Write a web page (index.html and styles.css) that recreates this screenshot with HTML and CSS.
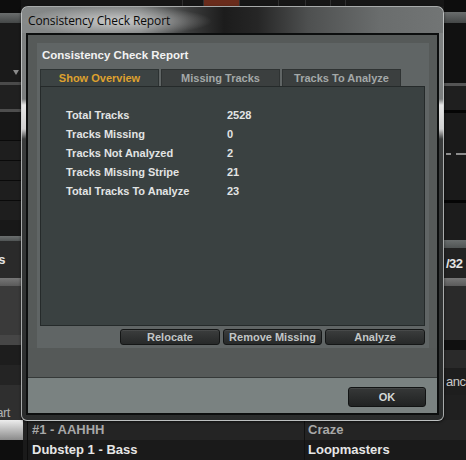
FILE: index.html
```html
<!DOCTYPE html>
<html>
<head>
<meta charset="utf-8">
<link rel="stylesheet" href="styles.css">
</head>
<body>
<div class="app">
  <div class="main">
    <div class="side">
      <div class="blk h13 c-0d"></div>
      <div class="blk h10 c-bar"></div>
      <div class="blk h59 c-1a drop"><span class="tri"></span></div>
      <div class="blk h3 c-4a"></div>
      <div class="blk h24 c-20"></div>
      <div class="blk h3 c-4d"></div>
      <div class="blk h28 c-17"></div>
      <div class="blk h20 c-row"></div>
      <div class="blk h20 c-row"></div>
      <div class="blk h20 c-row"></div>
      <div class="blk h20 c-row"></div>
      <div class="blk h16 c-18"></div>
      <div class="blk h5 c-bar2"></div>
      <div class="blk h37 c-2a lbl-r"><span class="side-txt">s</span></div>
      <div class="blk h8 c-bar3"></div>
      <div class="blk h49 c-3a"></div>
      <div class="blk h10 c-46"></div>
      <div class="blk h20 c-1d"></div>
      <div class="blk h20 c-24"></div>
      <div class="blk h35 c-2f lbl-r bottom"><span class="side-txt dim">Start</span></div>
    </div>
    <div class="center">
      <div class="topstrip">
        <span class="seg w161"></span>
        <span class="seg w20"></span>
        <span class="seg w35 orange"></span>
        <span class="seg w38"></span>
        <span class="seg w26"></span>
        <span class="seg w24"></span>
        <span class="seg w14"></span>
        <span class="seg grow"></span>
      </div>
    </div>
    <div class="side">
      <div class="blk h12 c-0d"></div>
      <div class="blk h11 c-bar"></div>
      <div class="blk h60 c-11"></div>
      <div class="blk h3 c-55"></div>
      <div class="blk h24 c-1f"></div>
      <div class="blk h3 c-05"></div>
      <div class="blk h87 c-1a dashes"><span class="dash d1"></span><span class="dash d2"></span></div>
      <div class="blk h3 c-05"></div>
      <div class="blk h37 c-1c"></div>
      <div class="blk h8 c-bar2"></div>
      <div class="blk h30 c-22 lbl-l"><span class="side-txt">/32</span></div>
      <div class="blk h8 c-bar3"></div>
      <div class="blk h54 c-2a"></div>
      <div class="blk h10 c-10"></div>
      <div class="blk h18 c-2a"></div>
      <div class="blk h27 c-1e lbl-l"><span class="side-txt dim2">ance</span></div>
      <div class="blk h25 c-20"></div>
    </div>
  </div>
  <div class="tracks">
    <div class="trow r1">
      <div class="tsel"></div>
      <div class="tgap"></div>
      <div class="ttitle">#1 - AAHHH</div>
      <div class="tartist">Craze</div>
    </div>
    <div class="trow r2">
      <div class="tsel"></div>
      <div class="tgap"></div>
      <div class="ttitle">Dubstep 1 - Bass</div>
      <div class="tartist">Loopmasters</div>
    </div>
  </div>

  <div class="dialog">
    <div class="titlebar"><span class="title">Consistency Check Report</span></div>
    <div class="client">
      <div class="panel">
        <div class="panel-head">Consistency Check Report</div>
        <div class="tabs">
          <div class="tab active">Show Overview</div>
          <div class="tab">Missing Tracks</div>
          <div class="tab">Tracks To Analyze</div>
        </div>
        <div class="content">
          <div class="stats">
            <div class="lbl">Total Tracks</div><div class="val">2528</div>
            <div class="lbl">Tracks Missing</div><div class="val">0</div>
            <div class="lbl">Tracks Not Analyzed</div><div class="val">2</div>
            <div class="lbl">Tracks Missing Stripe</div><div class="val">21</div>
            <div class="lbl">Total Tracks To Analyze</div><div class="val">23</div>
          </div>
        </div>
        <div class="actions">
          <div class="btn w100">Relocate</div>
          <div class="btn w99">Remove Missing</div>
          <div class="btn w100">Analyze</div>
        </div>
      </div>
      <div class="band"></div>
      <div class="footer">
        <div class="btn ok">OK</div>
      </div>
    </div>
  </div>
</div>
</body>
</html>
```

FILE: styles.css
```css
* { box-sizing: border-box; }
html, body { margin: 0; padding: 0; }
body {
  width: 466px;
  height: 460px;
  overflow: hidden;
  background: #151515;
  font-family: "Liberation Sans", Arial, sans-serif;
}
.app {
  position: relative;
  width: 466px;
  height: 460px;
  display: flex;
  flex-direction: column;
}
.main {
  display: flex;
  height: 420px;
}
.side {
  width: 22px;
  display: flex;
  flex-direction: column;
  overflow: hidden;
}
.main .side:first-child { width: 21px; }
.center {
  flex: 1;
  background: #1b1b1b;
}
.blk { flex: none; width: 100%; position: relative; }
.h3 { height: 3px; } .h5 { height: 5px; } .h8 { height: 8px; } .h10 { height: 10px; }
.h11 { height: 11px; } .h12 { height: 12px; } .h13 { height: 13px; } .h16 { height: 16px; }
.h18 { height: 18px; } .h20 { height: 20px; } .h24 { height: 24px; } .h25 { height: 25px; }
.h27 { height: 27px; } .h28 { height: 28px; } .h30 { height: 30px; } .h35 { height: 35px; }
.h37 { height: 37px; } .h49 { height: 49px; } .h54 { height: 54px; } .h59 { height: 59px; }
.h60 { height: 60px; } .h87 { height: 87px; }
.c-0d { background: #0d0d0d; } .c-05 { background: #050505; } .c-10 { background: #101010; }
.c-11 { background: #111; } .c-17 { background: #171717; } .c-18 { background: #181818; }
.c-1a { background: #1a1a1a; } .c-1c { background: #1c1c1c; } .c-1d { background: #1d1d1d; }
.c-1e { background: #1e1e1e; } .c-1f { background: #1f1f1f; } .c-20 { background: #202020; }
.c-22 { background: #222; } .c-24 { background: #242424; } .c-2a { background: #2a2a2a; }
.c-2f { background: #2f2f2f; } .c-3a { background: #3a3a3a; } .c-46 { background: #464646; }
.c-4a { background: #4a4a4a; } .c-4d { background: #4d4d4d; } .c-55 { background: #555; }
.c-bar { background: linear-gradient(#6a6d6d, #444747); }
.c-bar2 { background: linear-gradient(#6a6e6e, #505454); }
.c-bar3 { background: linear-gradient(#777, #5a5a5a); }
.c-row { background: #1e1e1e; border-top: 1px solid #0a0a0a; }
.drop {
  display: flex;
  justify-content: flex-end;
  align-items: flex-end;
  padding: 0 2px 7px 0;
}
.tri {
  width: 0; height: 0;
  border-left: 3px solid transparent;
  border-right: 3px solid transparent;
  border-top: 5px solid #8a8a8a;
}
.lbl-r {
  display: flex;
  justify-content: flex-end;
  align-items: center;
  padding-right: 16px;
  white-space: nowrap;
}
.lbl-r.bottom { align-items: flex-end; padding-right: 11px; padding-bottom: 0; }
.lbl-l {
  display: flex;
  align-items: center;
  padding-left: 2px;
  white-space: nowrap;
}
.side-txt {
  font-weight: bold;
  font-size: 13px;
  color: #e4e4e4;
  letter-spacing: -0.5px;
}
.side-txt.dim { color: #b0b0b0; font-weight: normal; }
.side-txt.dim2 { color: #c8c8c8; font-weight: normal; }
.dashes { display: flex; align-items: flex-start; padding-top: 40px; gap: 5px; padding-left: 2px; }
.dash { height: 2px; background: #8c8c8c; }
.d1 { width: 6px; } .d2 { width: 12px; }

.topstrip { display: flex; height: 6px; gap: 1px; background: #303030; }
.seg { background: #161616; flex: none; height: 6px; }
.w161 { width: 161px; } .w20 { width: 20px; } .w35 { width: 35px; } .w38 { width: 38px; }
.w26 { width: 26px; } .w24 { width: 24px; } .w14 { width: 14px; }
.seg.grow { flex: 1; }
.seg.orange { background: #6a2c1c; }

.tracks { height: 40px; display: flex; flex-direction: column; }
.trow {
  height: 20px;
  display: flex;
  align-items: center;
  font-weight: bold;
  font-size: 13px;
}
.r1 { background: #242424; color: #a8a8a8; }
.r2 { background: #1a1a1a; color: #e6e6e6; }
.tsel { width: 23px; height: 100%; }
.r1 .tsel { background: linear-gradient(#ededed, #8a8a8a); }
.r2 .tsel { background: #0e0e0e; }
.tgap { width: 5px; height: 100%; border-right: 1px solid #0c0c0c; }
.ttitle { width: 277px; padding-left: 4px; height: 100%; line-height: 20px; border-right: 1px solid #111; }
.tartist { padding-left: 3px; line-height: 20px; }

/* dialog */
.dialog {
  position: absolute;
  left: 21px;
  top: 6px;
  width: 423px;
  height: 415px;
  border: 1px solid rgba(210, 212, 212, 0.75);
  border-radius: 7px 7px 6px 6px;
  padding: 0 4px 5px 4px;
  display: flex;
  flex-direction: column;
  background: linear-gradient(to bottom,
    #7f8282 0, #7a7d7d 92px, #e6e6e6 98px, #d0d0d0 122px,
    #3a3c3c 132px, #2a2c2c 100%);
  box-shadow: 0 1px 3px rgba(0,0,0,0.6);
}
.titlebar {
  height: 26px;
  margin: 0 -4px;
  padding-left: 6px;
  display: flex;
  align-items: center;
  border-radius: 6px 6px 0 0;
  background:
    radial-gradient(ellipse 95px 15px at 95px 14px, rgba(215,215,215,0.85), rgba(200,200,200,0) 100%),
    linear-gradient(to right, #858888 0, #7c7f7f 28%, #3a3b3b 40%, #1c1c1c 48%, #262626 56%, #4e5050 68%, #6a6d6d 85%, #727575 100%);
}
.title {
  font-family: "Open Sans", "DejaVu Sans", sans-serif;
  font-size: 12px;
  color: #0a0a0a;
  letter-spacing: -0.1px;
}
.client {
  flex: 1;
  border: 2px solid #0c0e0e;
  background: #565a59;
  display: flex;
  flex-direction: column;
  padding: 8px 8px 0 9px;
}
.panel {
  background: #606565;
  height: 305px;
  flex: none;
  padding: 0 4px 3px 3px;
  display: flex;
  flex-direction: column;
}
.panel-head {
  height: 26px;
  line-height: 25px;
  padding-left: 2px;
  color: #f2f2f2;
  font-weight: bold;
  font-size: 11.5px;
}
.tabs {
  display: flex;
  height: 17px;
  gap: 2px;
}
.tab {
  width: 119px;
  height: 17px;
  line-height: 16px;
  text-align: center;
  font-size: 11px;
  font-weight: bold;
  color: #a3a8a8;
  background: #3b3f3f;
  border: 1px solid #2f3333;
  border-bottom: none;
}
.tab.active {
  color: #dea12e;
  background: #3c4343;
  border-color: #2c3232;
}
.content {
  height: 240px;
  background: #3a4141;
  border: 1px solid #252a2a;
  padding: 18px 0 0 25px;
}
.stats {
  display: grid;
  grid-template-columns: 161px auto;
  grid-auto-rows: 19px;
  align-items: center;
  font-size: 11px;
  font-weight: bold;
  color: #e2e4e4;
}
.actions {
  margin-top: 3px;
  height: 16px;
  display: flex;
  justify-content: flex-end;
  gap: 3px;
}
.btn {
  height: 16px;
  line-height: 14px;
  text-align: center;
  font-size: 11px;
  font-weight: bold;
  color: #c2c6c6;
  background: linear-gradient(#3b3d3d, #272929);
  border: 1px solid #141616;
  border-radius: 3px;
  box-shadow: inset 0 1px 0 rgba(255,255,255,0.07);
}
.w100 { width: 100px; }
.w99 { width: 99px; }
.band {
  height: 29px;
  margin: 0 -8px 0 -9px;
  background: #555958;
  border-bottom: 1px solid #353938;
  flex: none;
  height: 30px;
}
.footer {
  flex: 1;
  margin: 0 -8px 0 -9px;
  background: #7a8281;
  display: flex;
  justify-content: flex-end;
  align-items: flex-start;
  padding: 9px 11px 0 0;
}
.btn.ok {
  width: 78px;
  height: 20px;
  line-height: 18px;
  color: #d4d8d8;
  background: linear-gradient(#363838, #202222);
  border-color: #111313;
}
```
